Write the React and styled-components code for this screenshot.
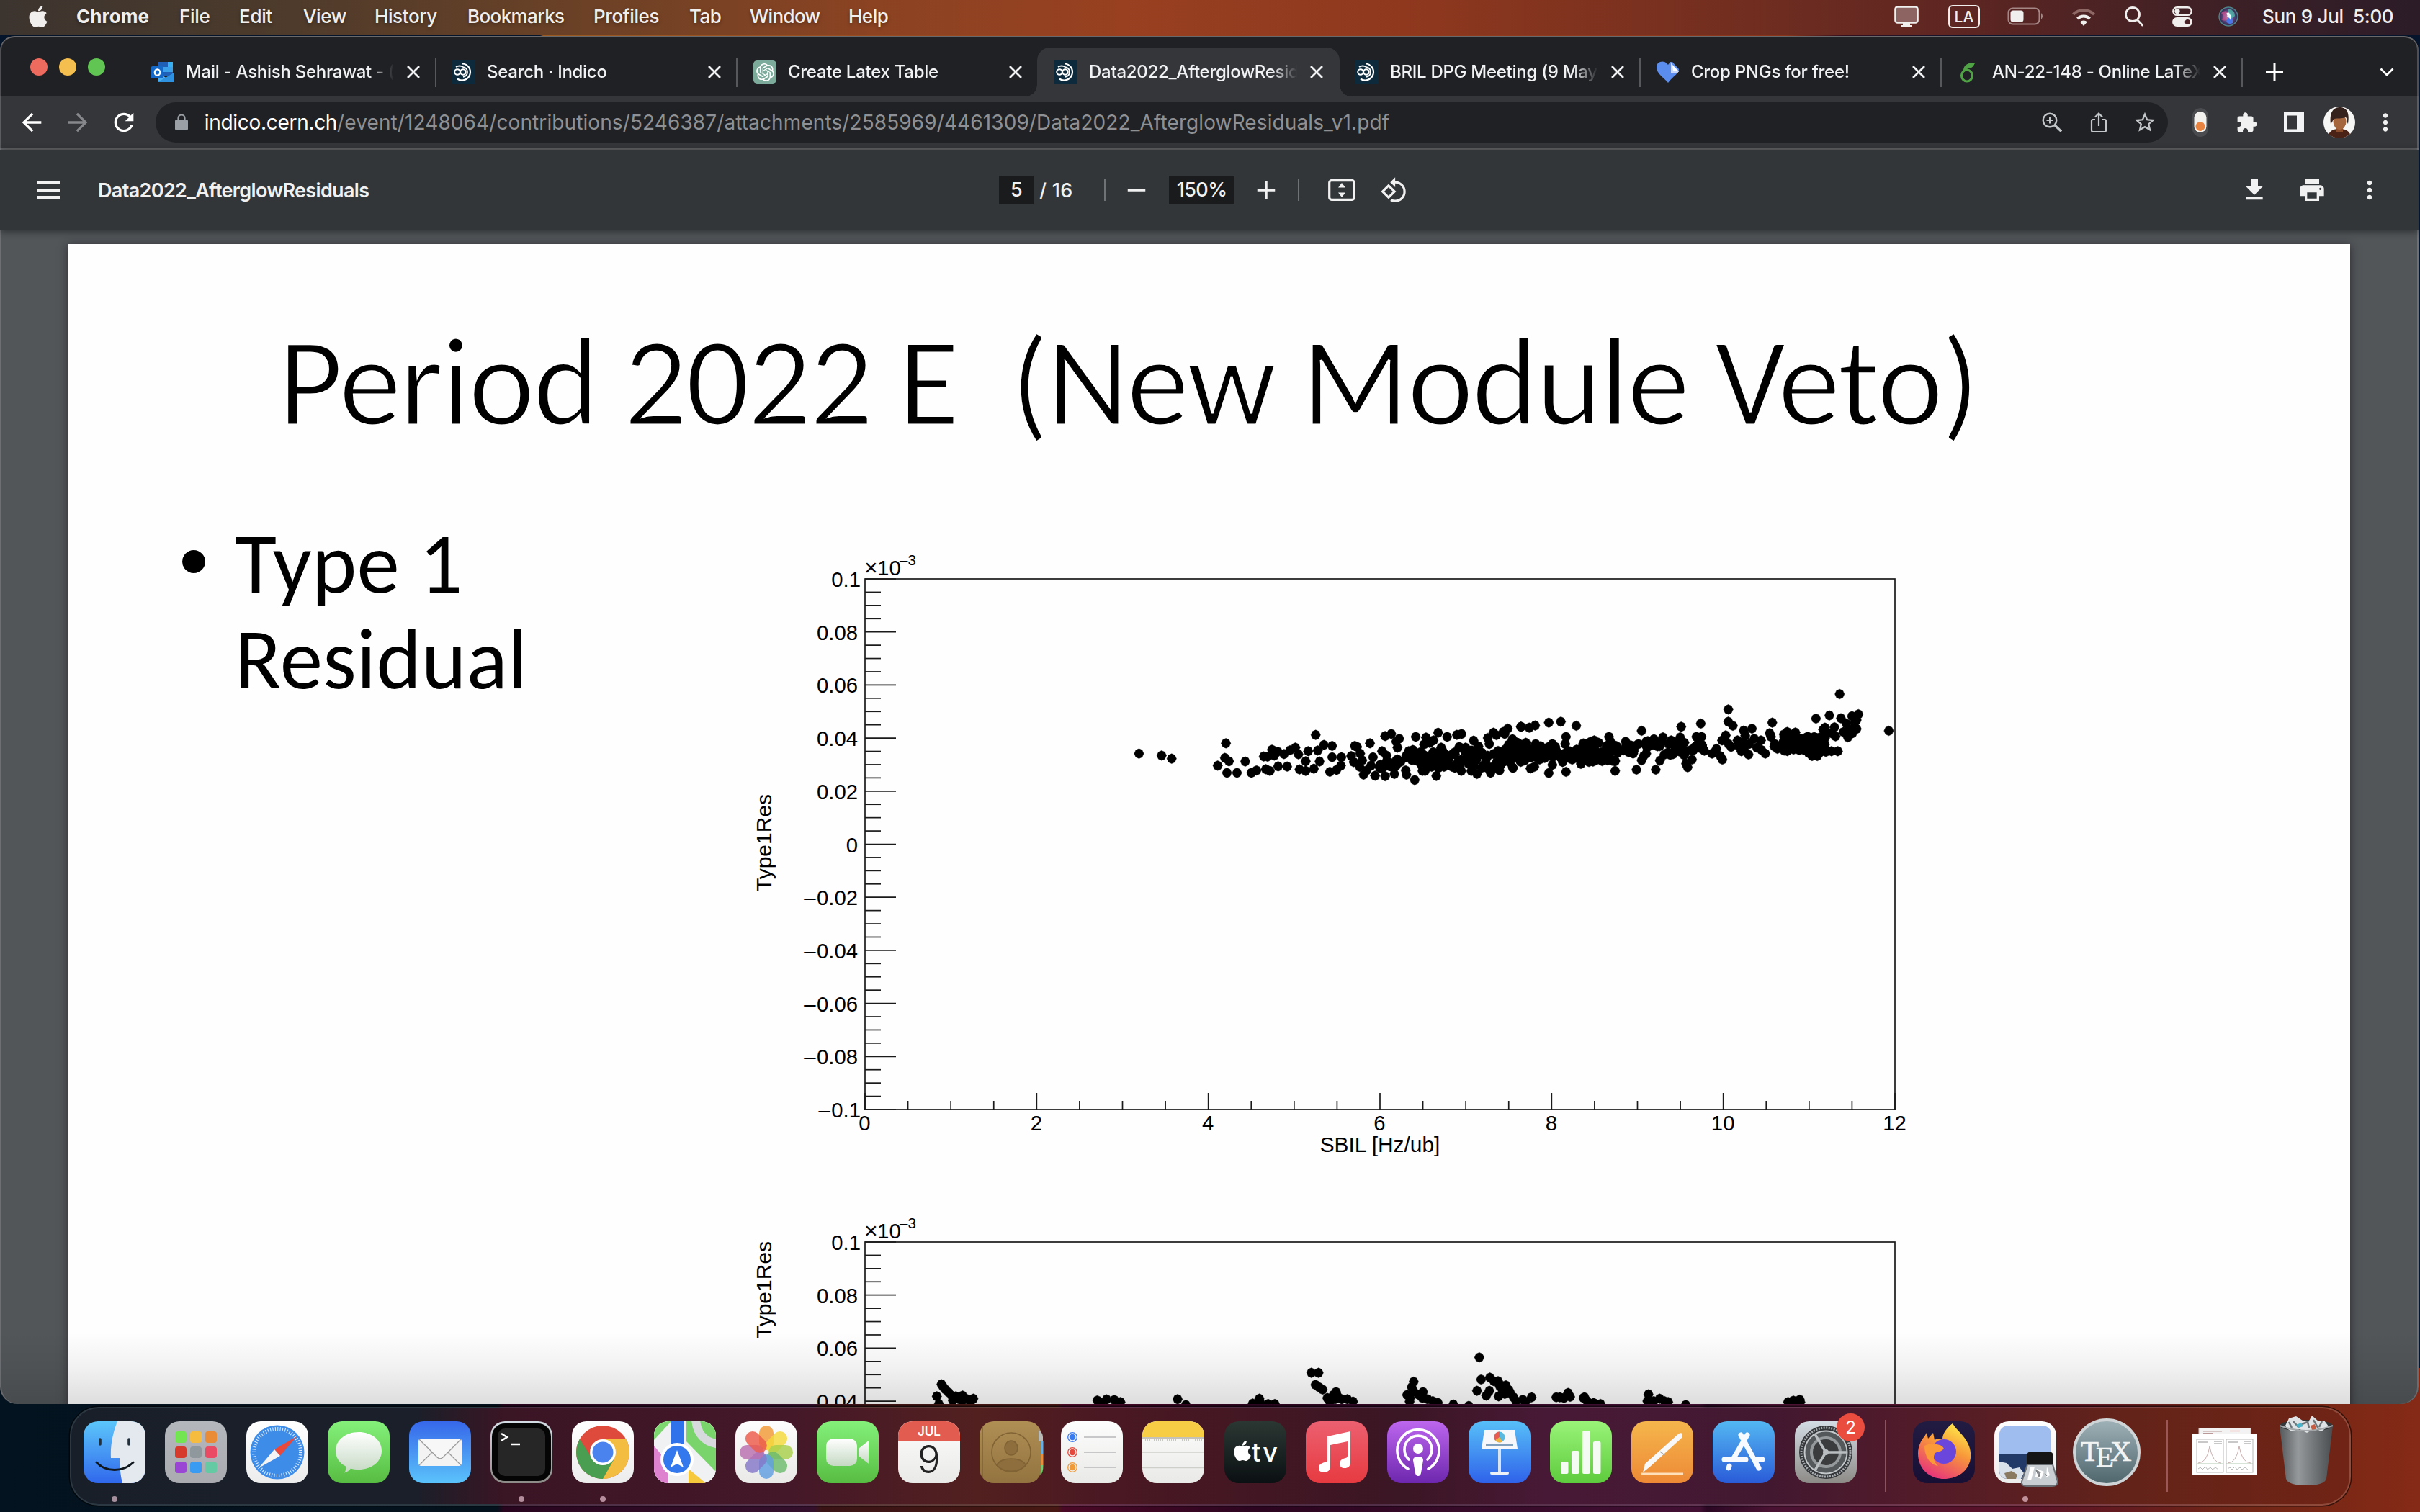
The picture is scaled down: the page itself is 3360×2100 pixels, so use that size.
import React from "react";
import styled, { createGlobalStyle } from "styled-components";
import { FaApple } from "react-icons/fa";
import { SiOpenai } from "react-icons/si";

const Global = createGlobalStyle`
  * { box-sizing: border-box; }
  html, body { margin: 0; padding: 0; overflow: hidden; }
  svg { display: block; flex: none; }
`;

const UI = `Inter, Roboto, "Liberation Sans", sans-serif`;

const Desktop = styled.div`
  width: 3360px;
  height: 2100px;
  overflow: hidden;
  display: flex;
  flex-direction: column;
  font-family: ${UI};
  background:
    linear-gradient(90deg, #03131f 0, #04121d 690px, #29051f 700px, #35102c 1130px, #3a1415 1140px, #481914 1468px, #4a0926 1476px, #2c0520 1750px, #421033 2360px, #2b0824 2370px, #4a1232 2460px, #5a1228 2800px, #702616 3110px, #852a16 3360px) 0 100% / 100% 200px no-repeat,
    linear-gradient(90deg, #04142b 0, #04142b 750px, #9a5a20 754px, #9a421e 1500px, #8a341a 2480px, #33101f 2560px, #0a1530 2760px, #06142c 3360px);
`;

/* ---------- menu bar ---------- */

const MenuBar = styled.header`
  height: 48px;
  flex: none;
  display: flex;
  align-items: center;
  justify-content: space-between;
  padding: 0 35px 3px 39px;
  color: #f0efed;
  font-size: 26px;
  background: linear-gradient(90deg, #3c342f 0, #4a3a2c 340px, #6b4126 800px, #8b4322 1210px, #984020 1560px, #8f381e 1950px, #78301f 2320px, #5c2522 2740px, #3c2026 3100px, #2b1c28 3360px);
`;

const MenuItems = styled.nav`
  display: flex;
  align-items: center;
`;

const MenuItem = styled.span`
  width: ${(p) => p.$w}px;
  font-weight: ${(p) => (p.$bold ? 700 : 500)};
  letter-spacing: ${(p) => p.$ls || 0}px;
  white-space: pre;
  text-shadow: 0 2px 5px rgba(0, 0, 0, 0.35);
`;

const StatusItems = styled.div`
  display: flex;
  align-items: center;
`;

const Status = styled.span`
  display: flex;
  width: ${(p) => p.$w}px;
  justify-content: center;
`;

const InputSource = styled.span`
  width: 44px;
  height: 32px;
  border: 2px solid #f0efed;
  border-radius: 6px;
  font-size: 21px;
  font-weight: 500;
  line-height: 29px;
  text-align: center;
`;

const Clock = styled.span`
  white-space: pre;
  font-weight: 500;
  width: 184px;
  margin-left: 16px;
  letter-spacing: -0.3px;
`;

/* ---------- browser window ---------- */

const Window = styled.main`
  position: relative;
  width: 3358px;
  height: 1900px;
  flex: none;
  margin-top: 2px;
  border-radius: 20px 20px 24px 24px;
  overflow: hidden;
  display: flex;
  flex-direction: column;
  background: #525659;
  &::after {
    content: "";
    position: absolute;
    inset: 0;
    border-radius: inherit;
    pointer-events: none;
    box-shadow: inset 0 2px 0 #69696b, inset 2px 0 0 rgba(150, 150, 155, 0.4), inset -2px 0 0 rgba(150, 150, 155, 0.4);
  }
`;

const TabStrip = styled.div`
  height: 84px;
  flex: none;
  display: flex;
  align-items: flex-end;
  background: #202124;
`;

const Lights = styled.div`
  display: flex;
  gap: 16px;
  width: 187px;
  height: 68px;
  padding: 15px 0 0 42px;
`;

const Light = styled.i`
  width: 24px;
  height: 24px;
  border-radius: 50%;
  background: ${(p) => p.$c};
`;

const Tab = styled.div`
  position: relative;
  width: 418px;
  height: 68px;
  display: flex;
  align-items: center;
  padding-left: 23px;
  color: #f1f2f4;
  &::after {
    content: "";
    position: absolute;
    right: -1px;
    top: 15px;
    width: 2px;
    height: 40px;
    background: ${(p) => (p.$divider ? "#56585b" : "transparent")};
  }
`;

const ActiveTab = styled(Tab)`
  background: #35363a;
  border-radius: 18px 18px 0 0;
  margin: 0 -1px;
  width: 420px;
  padding-left: 24px;
  &::before,
  &::after {
    content: "";
    position: absolute;
    top: auto;
    bottom: 0;
    width: 16px;
    height: 16px;
    background: radial-gradient(circle at 0 0, transparent 15.5px, #35363a 16px);
  }
  &::before { left: -16px; }
  &::after { right: -16px; background: radial-gradient(circle at 100% 0, transparent 15.5px, #35363a 16px); }
`;

const Favicon = styled.span`
  width: 32px;
  height: 32px;
  display: flex;
  align-items: center;
  justify-content: center;
  flex: none;
`;

const TabTitle = styled.span`
  width: 289px;
  margin-left: 16px;
  padding-bottom: 1px;
  font-size: 24px;
  font-weight: 500;
  letter-spacing: ${(p) => p.$ls}px;
  overflow: hidden;
  white-space: pre;
  mask-image: linear-gradient(90deg, #000 88%, transparent 100%);
`;

const Close = styled.span`
  display: flex;
  width: 24px;
  margin-left: 15px;
`;

const StripButton = styled.span`
  height: 68px;
  display: flex;
  align-items: center;
  margin-left: ${(p) => p.$ml}px;
`;

const Toolbar = styled.div`
  height: 74px;
  flex: none;
  display: flex;
  align-items: center;
  background: #35363a;
  border-bottom: 2px solid #606164;
`;

const NavButtons = styled.div`
  display: flex;
  width: 216px;
  padding-left: 24px;
  gap: 24px;
`;

const Omnibox = styled.div`
  width: 2798px;
  height: 56px;
  border-radius: 28px;
  background: #202124;
  display: flex;
  align-items: center;
  padding-left: 26px;
`;

const Url = styled.span`
  width: 2548px;
  margin-left: 22px;
  font-size: 28px;
  letter-spacing: 0.1px;
  color: #8e9093;
  white-space: nowrap;
  b { color: #ffffff; font-weight: 400; letter-spacing: -0.3px; }
`;

const IconSlot = styled.span`
  width: ${(p) => p.$w}px;
  flex: none;
  display: flex;
  justify-content: center;
`;

/* ---------- pdf viewer ---------- */

const PdfBar = styled.div`
  position: relative;
  z-index: 1;
  height: 112px;
  flex: none;
  display: flex;
  align-items: center;
  background: #323639;
  color: #f1f1f1;
  font-size: 27px;
  font-weight: 500;
  box-shadow: 0 2px 10px rgba(0, 0, 0, 0.45);
`;

const DocTitle = styled.span`
  width: 1251px;
  font-weight: 600;
  letter-spacing: -0.65px;
`;

const Field = styled.span`
  width: ${(p) => p.$w}px;
  height: 40px;
  line-height: 40px;
  text-align: center;
  background: #191b1c;
  letter-spacing: -0.6px;
`;

const PageCount = styled.span`
  width: 98px;
  padding-left: 8px;
  white-space: nowrap;
  letter-spacing: 0.3px;
`;

const Rule = styled.i`
  width: 2px;
  height: 30px;
  background: #707375;
  margin-right: ${(p) => p.$mr}px;
`;

const Viewer = styled.div`
  position: relative;
  flex: 1;
  display: flex;
  padding: 19px 0 0 95px;
  overflow: hidden;
  &::after {
    content: "";
    position: absolute;
    left: 0;
    right: 0;
    bottom: 0;
    height: 100px;
    background: linear-gradient(rgba(0, 0, 0, 0), rgba(0, 0, 0, 0.05) 50%, rgba(0, 0, 0, 0.13));
  }
`;

const Slide = styled.article`
  width: 3168px;
  height: 1900px;
  flex: none;
  background: #fefefe;
  box-shadow: 0 2px 12px rgba(20, 15, 25, 0.65);
  display: flex;
  flex-direction: column;
  font-family: Carlito, Calibri, Lato, sans-serif;
  color: #000;
`;

const SlideTitle = styled.h1`
  margin: 0;
  height: 421px;
  padding: 101px 0 0 291px;
  font-size: 175px;
  line-height: 180px;
  font-weight: 400;
  white-space: pre;
  letter-spacing: -2.7px;
  -webkit-text-stroke: 3.2px #fefefe;
`;

const SlideBody = styled.div`
  display: flex;
`;

const Bullets = styled.ul`
  list-style: none;
  margin: 0;
  width: 935px;
  padding: 0 0 0 158px;
`;

const Bullet = styled.li`
  display: flex;
  font-size: 119px;
  line-height: 133px;
  font-weight: 400;
  letter-spacing: 0.2px;
  margin-top: -44px;
`;

const Dot = styled.i`
  width: 32px;
  height: 32px;
  border-radius: 50%;
  background: #000;
  margin: 48px 41px 0 0;
`;

const Charts = styled.div`
  display: flex;
  flex-direction: column;
`;

/* ---------- chart ---------- */

const LEFT = 171;
const TOP = 44;
const W = 1430;
const H = 737;

// Deterministic jitter for the dense part of the cloud.
function makeRandom(seed) {
  let s = seed;
  return () => {
    s = (s * 1664525 + 1013904223) % 4294967296;
    return s / 4294967296;
  };
}

const at = (ox, oy, k, list) => list.map(([x, y]) => [ox + x * k, oy + y / 3]);

const sbilLow = [[60,440],[148,448],[187,461],[398,397],[366,490],[394,458],[410,472],[402,520],[441,520],[473,473],[497,520],[517,510],[553,505],[569,512],[601,493],[636,494],[545,452],[560,453],[577,424],[600,432],[586,448],[624,442],[647,426],[668,415],[680,443],[718,430],[755,427],[747,362],[779,404],[811,408],[708,472],[708,512],[684,506],[740,503],[762,473],[811,455],[847,455],[802,516],[828,508],[845,490],[885,450],[899,408],[908,412],[895,475],[920,440],[928,468],[918,495],[933,528],[945,510],[958,397],[978,532],[962,490],[970,455],[1005,430],[1017,367],[1041,358],[1017,534],[1053,525],[1060,490],[1035,490],[998,498],[1072,378],[1060,390],[1065,415],[1097,510],[1100,528],[1132,550],[1136,370],[1176,373],[1168,402],[1205,385],[1190,395],[1223,353],[1258,370],[1296,362],[1314,358],[1216,533],[1162,512],[1172,512],[1361,386],[1380,410],[1305,412],[1330,415],[1416,375],[1422,400],[1438,353],[1450,363],[1476,350],[1494,336],[1482,358],[1545,328],[1313,512],[1352,512],[1374,525],[1427,520],[1462,510],[1513,498],[1513,383],[1497,403],[1530,395],[1125,425],[1235,415]];
const sbilHigh = [[33,328],[65,332],[88,323],[141,311],[188,307],[248,324],[502,345],[656,328],[732,315],[839,256],[839,307],[857,324],[931,336],[899,344],[1010,311],[1180,294],[1232,281],[1272,192],[1277,293],[1320,284],[1345,276],[1338,300],[1338,337],[1298,315],[1287,350],[1304,372],[1322,355],[1312,340],[1252,330],[1215,332],[1208,340],[1220,355],[1256,368],[1240,355],[1463,345],[1240,430],[1265,430],[141,521],[155,487],[70,502],[85,495],[208,516],[208,370],[205,400],[266,483],[375,370],[381,390],[399,512],[399,470],[482,507],[502,468],[520,440],[510,450],[557,507],[573,469],[675,482],[681,497],[698,465],[816,465],[808,450],[776,440],[829,364],[815,385],[825,380],[850,412],[793,420],[840,400],[875,385],[918,444],[890,430],[905,400],[905,365],[880,410],[940,378],[966,385],[983,440],[950,415],[968,425],[1000,355],[1005,370],[1030,420],[1020,400],[1018,410],[1068,350],[1100,352],[1148,370],[1055,360],[1080,360],[1185,450],[0,380],[2,500],[20,395],[52,395],[90,400],[105,465],[155,400],[145,410],[318,385],[305,390],[335,395],[440,390],[195,475],[232,465],[550,380],[585,372],[520,390],[490,400],[652,372],[715,370],[735,370],[725,390],[617,385],[670,440],[1195,375],[1205,385],[1215,375],[1330,312],[920,400],[888,395],[902,428]];

// [x from, x to, upper edge, lower edge, count], same local units as the lists above.
const cloudLow = [[990, 1080, 445, 500, 14], [1080, 1240, 430, 470, 36], [1150, 1320, 465, 500, 20], [1210, 1480, 425, 470, 40], [1340, 1480, 465, 505, 16], [1480, 1568, 395, 480, 38]];
const cloudHigh = [[0, 110, 405, 460, 34], [115, 250, 410, 460, 32], [250, 400, 430, 475, 34], [270, 350, 395, 430, 10], [350, 480, 405, 440, 26], [520, 600, 385, 415, 13], [590, 680, 390, 450, 22], [690, 765, 395, 430, 15], [1050, 1210, 370, 430, 65], [1150, 1220, 400, 450, 22]];

function fill(bands, seed) {
  const r = makeRandom(seed);
  return bands.flatMap(([a, b, t, u, n]) => Array.from({ length: n }, () => [a + (b - a) * r(), t + (u - t) * r()]));
}

const scatterTop = [
  ...at(1560 - 1030, 900 - 760, 0.3571, [...sbilLow, ...fill(cloudLow, 7)]),
  ...at(2100 - 1030, 900 - 760, 0.3571, [...sbilHigh, ...fill(cloudHigh, 23)]),
];

const timeLeft = [[290,68],[293,78],[298,90],[304,102],[310,115],[281,118],[285,150],[322,128],[331,115],[340,130],[352,128],[312,135],[330,138],[318,118],[347,140],[593,135],[611,131],[626,133],[638,142],[600,145],[749,130],[765,154],[908,128],[895,148],[910,145],[925,150],[938,150],[1009,20],[1023,20],[1017,70],[1024,80],[1031,90],[1057,100],[1052,112],[1040,125],[1055,130],[1068,130],[1079,130],[1090,140],[1045,142],[1060,118],[1208,57],[1204,80],[1195,112],[1208,98],[1226,100],[1218,112],[1225,125],[1235,130],[1245,138],[1200,140],[1201,125],[1255,145],[1285,152],[1315,158],[1331,95],[1339,48],[1356,40],[1364,55],[1372,55],[1387,72],[1349,115],[1355,95],[1375,75],[1380,90],[1373,118],[1385,80],[1393,92],[1396,105],[1385,108],[1402,122],[1407,138],[1420,132],[1425,142],[1437,122],[1485,122],[1492,122],[1508,104],[1500,125],[1512,120],[1538,125],[1545,138],[1558,146]];
const timeRight = [[0,122],[15,148],[30,150],[120,110],[118,138],[130,138],[141,128],[150,138],[157,142],[190,154],[382,142],[392,136],[404,132],[405,142]];
const scatterBottom = [
  ...at(1100 - 1030, 1900 - 1681, 0.7143, timeLeft),
  ...at(2200 - 1030, 1900 - 1681, 0.7398, timeRight),
  [1023.9, 204.3],
];

function Chart({ points, height, yTitleEnd, xAxis }) {
  const yTicks = Array.from({ length: xAxis ? 41 : 14 }, (_, i) => i);
  const xTicks = Array.from({ length: 25 }, (_, i) => i);
  return (
    <svg width="1700" height={height} viewBox={`0 0 1700 ${height}`} fontFamily='"Liberation Sans", Arial, sans-serif' fontSize="29.3" fill="#000">
      <rect x={LEFT} y={TOP} width={W} height={H} fill="none" stroke="#1a1a1a" strokeWidth="1.7" />
      {yTicks.map((i) => (
        <line key={i} x1={LEFT} x2={LEFT + (i % 4 ? 22 : 43)} y1={TOP + (i * H) / 40} y2={TOP + (i * H) / 40} stroke="#1a1a1a" strokeWidth="1.7" />
      ))}
      {yTicks.filter((i) => i % 4 === 0).map((i) => {
        const v = (20 - i) / 200;
        const edge = i === 0 || i === 40;
        const label = v === 0 ? "0" : Math.abs(v).toFixed(edge ? 1 : 2);
        return (
          <text key={i} x={edge ? 165 : 161} y={TOP + (i * H) / 40 + 11} textAnchor="end">
            {v < 0 && <tspan letterSpacing="1.5">–</tspan>}{label}
          </text>
        );
      })}
      <text x="170" y="39" fontSize="32">×<tspan x="188" fontSize="29.500">10</tspan></text>
      <text x="219" y="25" fontSize="20.500">–3</text>
      <text transform={`translate(41 ${yTitleEnd}) rotate(-90)`} fontSize="30">Type1Res</text>
      {xAxis && xTicks.map((i) => (
        <line key={i} x1={LEFT + (i * W) / 24} x2={LEFT + (i * W) / 24} y1={TOP + H} y2={TOP + H - (i % 4 ? 12 : 23)} stroke="#1a1a1a" strokeWidth="1.7" />
      ))}
      {xAxis && xTicks.filter((i) => i % 4 === 0).map((i) => (
        <text key={i} x={LEFT + (i * W) / 24 - 0.5} y={TOP + H + 29} textAnchor="middle">{i / 2}</text>
      ))}
      {xAxis && <text x="886" y="840" textAnchor="middle" fontSize="29.900">SBIL [Hz/ub]</text>}
      {points.map(([x, y], i) => (
        <path key={i} d={`M${x - 6.6} ${y}l2.200-4.800 4.400-2 4.400 2 2.200 4.800-2.200 4.800-4.400 2-4.400-2z`} stroke="#000" strokeWidth="0.500" />
      ))}
    </svg>
  );
}

/* ---------- small glyphs ---------- */

const Glyph = ({ d, size = 40, color = "#f1f1f1", children }) => (
  <svg width={size} height={size} viewBox="0 0 24 24" fill={color}>
    {d && <path d={d} />}
    {children}
  </svg>
);

const PATH = {
  back: "M20 11H7.83l5.59-5.59L12 4l-8 8 8 8 1.41-1.41L7.83 13H20v-2z",
  forward: "M12 4l-1.41 1.41L16.17 11H4v2h12.17l-5.58 5.59L12 20l8-8z",
  reload: "M17.65 6.35C16.2 4.9 14.21 4 12 4c-4.42 0-7.99 3.58-7.99 8s3.57 8 7.99 8c3.73 0 6.84-2.55 7.73-6h-2.08c-.82 2.33-3.04 4-5.65 4-3.31 0-6-2.69-6-6s2.69-6 6-6c1.66 0 3.14.69 4.22 1.78L13 11h7V4l-2.35 2.35z",
  star: "M22 9.24l-7.19-.62L12 2 9.19 8.63 2 9.24l5.46 4.73L5.82 21 12 17.27 18.18 21l-1.63-7.03L22 9.24zM12 15.4l-3.76 2.27 1-4.28-3.32-2.88 4.38-.38L12 6.1l1.71 4.04 4.38.38-3.32 2.88 1 4.28L12 15.4z",
  puzzle: "M20.5 11H19V7c0-1.1-.9-2-2-2h-4V3.5C13 2.12 11.88 1 10.5 1S8 2.12 8 3.5V5H4c-1.1 0-1.99.9-1.99 2v3.8H3.5c1.49 0 2.7 1.21 2.7 2.7s-1.21 2.7-2.7 2.7H2V20c0 1.1.9 2 2 2h3.8v-1.5c0-1.49 1.21-2.7 2.7-2.7 1.49 0 2.7 1.21 2.7 2.7V22H17c1.1 0 2-.9 2-2v-4h1.5c1.38 0 2.5-1.12 2.5-2.5S21.88 11 20.5 11z",
  download: "M19 9h-4V3H9v6H5l7 7 7-7zM5 18v2h14v-2H5z",
  print: "M19 8H5c-1.66 0-3 1.34-3 3v6h4v4h12v-4h4v-6c0-1.66-1.34-3-3-3zm-3 11H8v-5h8v5zm3-7c-.55 0-1-.45-1-1s.45-1 1-1 1 .45 1 1-.45 1-1 1zm-1-9H6v4h12V3z",
  more: "M12 8c1.1 0 2-.9 2-2s-.9-2-2-2-2 .9-2 2 .9 2 2 2zm0 2c-1.1 0-2 .9-2 2s.9 2 2 2 2-.9 2-2-.9-2-2-2zm0 6c-1.1 0-2 .9-2 2s.9 2 2 2 2-.9 2-2-.9-2-2-2z",
  plus: "M19 13h-6v6h-2v-6H5v-2h6V5h2v6h6v2z",
  minus: "M19 13H5v-2h14v2z",
  rotate: "M7.34 6.41L.86 12.9l6.49 6.48 6.49-6.48-6.5-6.49zM3.69 12.9l3.66-3.66L11 12.9l-3.66 3.66-3.65-3.66zm15.67-6.26C17.61 4.88 15.3 4 13 4V.76L8.76 5 13 9.24V6c1.79 0 3.58.68 4.95 2.05 2.73 2.73 2.73 7.17 0 9.9C16.58 19.32 14.79 20 13 20c-.97 0-1.94-.21-2.84-.61l-1.49 1.49C10.02 21.62 11.51 22 13 22c2.3 0 4.61-.88 6.36-2.64 3.52-3.51 3.52-9.21 0-12.72z",
};

const Cross = () => (
  <svg width="24" height="24" viewBox="0 0 24 24" stroke="#f1f2f4" strokeWidth="2.600">
    <path d="M4 4l16 16M20 4L4 20" />
  </svg>
);

const MenuGlyph = () => (
  <svg width="32" height="24" viewBox="0 0 32 24" fill="#f1f1f1">
    <path d="M0 0h32v4H0zM0 10h32v4H0zM0 20h32v4H0z" />
  </svg>
);

const PageActions = () => (
  <>
    <IconSlot $w={34}>
      <svg width="28" height="28" viewBox="0 0 28 28" fill="none" stroke="#c4c7ca" strokeWidth="2.400"><circle cx="11" cy="11" r="9.300" /><path d="M17.500 17.500L27 26.500" strokeWidth="3.200" /><path d="M11 6.500v9M6.500 11h9" strokeWidth="2" /></svg>
    </IconSlot>
    <IconSlot $w={96}>
      <svg width="24" height="30" viewBox="0 0 24 30" fill="none" stroke="#c4c7ca" strokeWidth="2.200"><path d="M7 11H4q-2 0-2 2v13q0 2 2 2h16q2 0 2-2V13q0-2-2-2h-3M12 20V3M7 7.500l5-5 5 5" /></svg>
    </IconSlot>
    <IconSlot $w={32}><Glyph d={PATH.star} size={34} color="#c4c7ca" /></IconSlot>
  </>
);

const Outlook = () => (
  <svg width="32" height="32" viewBox="0 0 32 32">
    <rect x="10" y="2" width="20" height="20" fill="#1f5fb8" />
    <path d="M17 9h13v7H17z" fill="#3aa0ea" />
    <path d="M23 2h7v7h-7z" fill="#35b0f5" />
    <path d="M9 17l11.500 7L32 17v13H9z" fill="#4bb0f0" />
    <path d="M32 17L9 30h23z" fill="#2f92e0" />
    <rect x="0" y="8" width="17" height="17" rx="1.500" fill="#1668c6" />
    <ellipse cx="8.500" cy="16.500" rx="3.700" ry="4.200" fill="none" stroke="#fff" strokeWidth="2.200" />
  </svg>
);

const Indico = () => (
  <svg width="32" height="32" viewBox="0 0 32 32" fill="none" stroke="#fff">
    <rect width="32" height="32" fill="#0c2a3c" stroke="none" />
    <circle cx="7" cy="16" r="3.800" strokeWidth="2" />
    <circle cx="15" cy="16" r="3.800" strokeWidth="2" />
    <path d="M14 4.500a11.500 11.500 0 1 1-7 21" strokeWidth="2.200" />
    <path d="M5 9q5-3 10 0 6 1.500 6 7t-6 7" strokeWidth="1.800" />
  </svg>
);

const ChatIcon = styled.span`
  width: 32px;
  height: 32px;
  border-radius: 5px;
  background: #7cab9b;
  color: #fff;
  display: flex;
  align-items: center;
  justify-content: center;
`;

const Heart = () => (
  <svg width="32" height="32" viewBox="0 0 32 32">
    <path d="M16 31C8 22 0 18 0 9 0 2 9-1 14 4l2 2 3-4h3l9 10c0 6-8 10-15 19z" fill="#5b8def" />
    <path d="M20 4l11 11-3 3-8-1z" fill="#fff" />
    <path d="M20 17l8 1 3-3-8-1-1-8-2-2z" fill="#c5d7ff" />
  </svg>
);

const Leaf = () => (
  <svg width="32" height="32" viewBox="0 0 32 32">
    <ellipse cx="13" cy="21" rx="7.500" ry="8" fill="none" stroke="#4fa345" strokeWidth="3.200" />
    <path d="M8 13C9 6 14 3 25 3c-3 2-2 7-9 8-3 .5-5 2-8 4z" fill="#4fa345" />
  </svg>
);

const ToggleExtension = () => (
  <svg width="24" height="42" viewBox="0 0 24 42">
    <rect x="1" y="1" width="22" height="40" rx="11" fill="#4b4c50" />
    <rect x="3.500" y="6" width="17" height="29" rx="8.500" fill="#f3f1ee" />
    <circle cx="12" cy="26.500" r="6.500" fill="#e88440" />
  </svg>
);

const Avatar = () => (
  <svg width="44" height="44" viewBox="0 0 44 44">
    <clipPath id="face"><circle cx="22" cy="22" r="22" /></clipPath>
    <g clipPath="url(#face)">
      <rect width="44" height="44" fill="#f6f6f4" />
      <path d="M6 44c1-9 5-13 16-13s15 4 17 13z" fill="#4b2216" />
      <rect x="17" y="25" width="10" height="11" fill="#8a4d2c" />
      <ellipse cx="22.500" cy="21" rx="9" ry="11" fill="#a5653d" />
      <path d="M10 24C8 6 15 1 23 1s14 6 11 23c-2-3-1-7-3-9-6 2-12 1-16 2-2 1-2 4-5 7z" fill="#35221c" />
    </g>
  </svg>
);

/* ---------- dock ---------- */

const DockPanel = styled.footer`
  width: 3167px;
  height: 137px;
  flex: none;
  margin: 4px 0 0 97px;
  border-radius: 40px;
  border: 2px solid rgba(255, 255, 255, 0.16);
  display: flex;
  padding: 18px 0 0 3px;
  background: linear-gradient(90deg, #191f29 0, #1b1f29 480px, #3a1524 600px, #451829 1000px, #52201f 1260px, #4a1822 1430px, #3b1624 1850px, #481936 2050px, #421830 2360px, #521b2a 2560px, #632319 2850px, #702415 3167px);
  background-clip: padding-box;
  box-shadow: 0 0 0 1.5px rgba(0, 0, 0, 0.6);
`;

const DockItem = styled.div`
  position: relative;
  width: ${(p) => p.$w || 113.15}px;
  display: flex;
  flex-direction: column;
  align-items: center;
`;

const Running = styled.i`
  width: 8px;
  height: 8px;
  border-radius: 50%;
  margin-top: 18px;
  background: rgba(255, 215, 230, 0.62);
`;

const DockRule = styled.i`
  width: 2px;
  height: 100px;
  margin: -2px ${(p) => p.$mr}px 0 ${(p) => p.$ml}px;
  background: rgba(220, 150, 160, 0.45);
`;

const Badge = styled.span`
  position: absolute;
  right: 2px;
  top: -11px;
  width: 39px;
  height: 39px;
  border-radius: 50%;
  background: #ea4d3e;
  color: #fff;
  font-size: 24px;
  line-height: 39px;
  text-align: center;
`;

const TILES = {
  finder: ["#5cc6fa", "#3068ec"],
  launchpad: ["#b4b7bb", "#a9abb1"],
  white: ["#ffffff", "#ececec"],
  green: ["#84f07a", "#57bd42"],
  mail: ["#3667ea", "#5bc3fb"],
  contacts: ["#b08f55", "#93733f"],
  tv: ["#2b3733", "#0b1012"],
  music: ["#ec6070", "#e73a40"],
  podcasts: ["#bd66ee", "#6d27ae"],
  keynote: ["#57bff8", "#2f62ea"],
  numbers: ["#99f378", "#5ecb3d"],
  pages: ["#f5b64c", "#ed8936"],
  store: ["#53b7f2", "#2a5bd8"],
  settings: ["#d3dce4", "#8d8b87"],
  firefox: ["#221b42", "#170f34"],
  paper: ["#fdfdfd", "#e9e9e7"],
};

function Tile({ tone, children }) {
  const [a, b] = TILES[tone];
  const id = "t-" + tone;
  return (
    <svg width="86" height="86" viewBox="0 0 86 86" overflow="visible">
      <defs>
        <linearGradient id={id} x2="0" y2="1"><stop stopColor={a} /><stop offset="1" stopColor={b} /></linearGradient>
        <linearGradient id="soft" x2="0" y2="1"><stop stopColor="#fff" /><stop offset="1" stopColor="#c5d9c3" /></linearGradient>
        <clipPath id="tile"><rect width="86" height="86" rx="20" /></clipPath>
      </defs>
      <rect width="86" height="86" rx="20" fill={`url(#${id})`} />
      {children}
    </svg>
  );
}

const Finder = () => (
  <Tile tone="finder">
    <path clipPath="url(#tile)" d="M47 0H86V86H54C51 74 50 62 50 51H38C37 33 41 15 47 0z" fill="#e4e9f0" />
    <path d="M23 25v7M63 25v7" stroke="#22303e" strokeWidth="3.600" strokeLinecap="round" />
    <path d="M18 57c13 14 37 14 51 0" stroke="#10161d" strokeWidth="3" fill="none" strokeLinecap="round" />
  </Tile>
);

const padColors = ["#74e552", "#f5bc40", "#ea8b35", "#d63a2c", "#8f989c", "#ea4a63", "#9a45d3", "#3a9bf3", "#63caa4"];
const Launchpad = () => (
  <Tile tone="launchpad">
    {padColors.map((c, i) => (
      <rect key={i} x={14 + (i % 3) * 21} y={14 + Math.floor(i / 3) * 21} width="16" height="16" rx="4" fill={c} />
    ))}
  </Tile>
);

const Safari = () => (
  <Tile tone="white">
    <circle cx="43" cy="43" r="37.500" fill="#3d8ce8" />
    <circle cx="43" cy="43" r="32.500" fill="none" stroke="#dceaff" strokeWidth="5" strokeDasharray="1.100 2.303" />
    <path d="M70 21L47 48 39 39z" fill="#e9493c" />
    <path d="M17 65L39 39 47 48z" fill="#f4f4f4" />
  </Tile>
);

const Messages = () => (
  <Tile tone="green">
    <path d="M43 15c18 0 32 11 32 26S61 67 43 67c-4 0-8-.5-11-1.500-2 3-5 5-9 6 2-3 3-6 2-9C16 58 11 50 11 41c0-15 14-26 32-26z" fill="url(#soft)" />
  </Tile>
);

const Mail = () => (
  <Tile tone="mail">
    <rect x="13" y="24" width="60" height="38" rx="4" fill="#f3f3f3" />
    <path d="M14 61l20-20M72 61L52 41" stroke="#9a9a9a" strokeWidth="1.300" />
    <path d="M14 25l25 25c2.500 2.300 5.500 2.300 8 0l25-25" fill="#f7f7f7" stroke="#9a9a9a" strokeWidth="1.300" />
  </Tile>
);

const Terminal = () => (
  <Tile tone="settings">
    <rect x="2" y="3" width="82" height="80" rx="18" fill="#050505" />
    <rect x="10" y="10" width="66" height="66" rx="10" fill="#262626" />
    <path d="M15 17l8 5-8 5M29 32h12" stroke="#fff" strokeWidth="2.600" fill="none" />
  </Tile>
);

const Chrome = () => (
  <Tile tone="white">
    <circle cx="43" cy="43" r="37" fill="#de4b3c" />
    <path d="M11 24.500A37 37 0 0 0 43 80L59 52 28 52z" fill="#4a9e52" />
    <path d="M75 24.500H43L59 52 43 80A37 37 0 0 0 75 24.500z" fill="#f3bd42" />
    <circle cx="43" cy="43" r="18" fill="#fff" />
    <circle cx="43" cy="43" r="14.500" fill="#4a83ee" />
  </Tile>
);

const Maps = () => (
  <Tile tone="white">
    <g clipPath="url(#tile)">
      <rect width="86" height="86" fill="#f0f1f3" />
      <path d="M0 0h24L0 26z" fill="#7ed870" />
      <path d="M45 0h41v70L45 28z" fill="#79d46c" />
      <path d="M0 34l20 24v28H0z" fill="#de82cf" />
      <path d="M48 86V66l24 20z" fill="#f6c83c" />
      <path d="M58-6c0 22 12 36 34 38" fill="none" stroke="#d6dadd" strokeWidth="12" />
      <rect x="23" y="0" width="18" height="44" fill="#2f72ea" />
      <circle cx="32" cy="53" r="23" fill="#fff" />
      <circle cx="32" cy="53" r="19" fill="#3478ee" />
      <path d="M32 40l9 24-9-5-9 5z" fill="#fff" />
    </g>
  </Tile>
);

const petals = ["#f29a37", "#f4d93a", "#a9cf4a", "#6dbb6c", "#5f9fe0", "#8477c8", "#b96fb0", "#ec5a4a"];
const Photos = () => (
  <Tile tone="paper">
    {petals.map((c, i) => (
      <rect key={i} x="33" y="6" width="20" height="34" rx="10" fill={c} opacity="0.82" transform={`rotate(${i * 45} 43 43)`} />
    ))}
  </Tile>
);

const FaceTime = () => (
  <Tile tone="green">
    <rect x="13" y="24" width="43" height="38" rx="10" fill="url(#soft)" />
    <path d="M58 38l14-11v32L58 48z" fill="url(#soft)" />
  </Tile>
);

const Calendar = () => (
  <Tile tone="paper">
    <path clipPath="url(#tile)" d="M0 0h86v27H0z" fill="#e25d4f" />
    <text x="43" y="20" fontSize="17" fontWeight="600" textAnchor="middle" fill="#fff" fontFamily="Inter, sans-serif">JUL</text>
    <text x="43" y="72" fontSize="53" fontWeight="300" textAnchor="middle" fill="#222" fontFamily="Inter, sans-serif">9</text>
  </Tile>
);

const Contacts = () => (
  <Tile tone="contacts">
    <path d="M82 12q6 4 6 10v6h-6z" fill="#b9b9b6" />
    <path d="M85.500 28h3v17h-3z" fill="#5eb3ee" />
    <path d="M85.500 45h3v16h-3z" fill="#ee8c35" />
    <path d="M85.500 61h3q0 10-4 14z" fill="#6ed06a" />
    <g fill="none" stroke="#806334" strokeWidth="1.600">
      <circle cx="44" cy="43" r="27" />
      <ellipse cx="44" cy="37" rx="9" ry="10" fill="#8d6e3c" />
      <path d="M24 61c4-12 36-12 40 0-10 11-30 11-40 0z" fill="#8d6e3c" />
    </g>
    <path d="M4 8v70" stroke="#806334" strokeWidth="1.500" />
  </Tile>
);

const Reminders = () => (
  <Tile tone="paper">
    {["#3a7cf0", "#e5493d", "#f09a37"].map((c, i) => (
      <g key={c} transform={`translate(0 ${22 + i * 21})`}>
        <circle cx="16" cy="0" r="6.300" fill="none" stroke={c} strokeWidth="1.300" />
        <circle cx="16" cy="0" r="4.300" fill={c} />
        <path d="M32 0h44" stroke="#b9b9bb" strokeWidth="1.600" />
      </g>
    ))}
  </Tile>
);

const Notes = () => (
  <Tile tone="paper">
    <path clipPath="url(#tile)" d="M0 0h86v22H0z" fill="#f7cd46" />
    <path d="M0 23h86" stroke="#b5b1a6" strokeWidth="1.500" />
    <path d="M4 26h80" stroke="#c9c6bd" strokeWidth="2" strokeDasharray="1 2" />
    <path d="M0 43h86M0 64.500h86" stroke="#cfcfca" strokeWidth="1.500" />
  </Tile>
);

const Tv = () => (
  <Tile tone="tv">
    <FaApple size={32} x="9" y="25" color="#fff" />
    <text x="38" y="56" fontSize="36" fontWeight="500" fill="#fff" fontFamily="Inter, sans-serif" textLength="36">tv</text>
  </Tile>
);

const Music = () => (
  <Tile tone="music">
    <path d="M30 21l32-7v43c0 5-3 8-8 8-4 0-7-2-7-6 0-5 4-7 8-8 2-.4 3-1 3-3V28l-24 5v30c0 5-4 8-9 8-4 0-7-2-7-6 0-5 4-7 8-8 3-.5 4-1 4-3z" fill="#fff" />
  </Tile>
);

const Podcasts = () => (
  <Tile tone="podcasts">
    <g fill="none" stroke="#fff" strokeWidth="3.600" strokeLinecap="round">
      <path d="M29 66a29 29 0 1 1 28 0" />
      <path d="M30 53a19 19 0 1 1 26 0" />
    </g>
    <circle cx="43" cy="38" r="7" fill="#fff" />
    <path d="M36 54q0-5 7-5t7 5l-3 18q-1 4-4 4t-4-4z" fill="#fff" />
  </Tile>
);

const Keynote = () => (
  <Tile tone="keynote">
    <path d="M22 12h42l4 26H18z" fill="#f5f7fa" />
    <path d="M24 33h38" stroke="#7ea0be" strokeWidth="2.500" />
    <circle cx="43" cy="22" r="7.500" fill="#5bb8e0" />
    <path d="M43 22v-7.500a7.500 7.500 0 0 0-6 12z" fill="#e95b50" />
    <path d="M43 22l-6 4.500a7.500 7.500 0 0 0 10 1.800z" fill="#f0b240" />
    <rect x="41" y="38" width="4" height="34" fill="#dbe3ec" />
    <rect x="30" y="70" width="26" height="4" rx="2" fill="#eef2f6" />
  </Tile>
);

const Numbers = () => (
  <Tile tone="numbers">
    {[[15, 17], [30, 32], [45, 60], [60, 45]].map(([x, h]) => (
      <rect key={x} x={x} y={73 - h} width="10.500" height={h} rx="2" fill="#f4fbf2" />
    ))}
  </Tile>
);

const Pages = () => (
  <Tile tone="pages">
    <path d="M14 73h58" stroke="#ffe0bb" strokeWidth="3" />
    <path d="M66 17c5-2 6 1 4 6L26 63l-10 8 3-12z" fill="#f8f8f8" />
    <path d="M40 42l6 5" stroke="#a9a9a9" strokeWidth="1.500" />
  </Tile>
);

const Store = () => (
  <Tile tone="store">
    <g stroke="#f7fbff" strokeWidth="7" strokeLinecap="round">
      <path d="M39 19L64 65M48 19L28 53" />
      <path d="M16 53h30M59 53h10M23 62l-1 3" />
    </g>
  </Tile>
);

const Settings = () => (
  <Tile tone="settings">
    <circle cx="43" cy="43" r="37" fill="#35373a" />
    <circle cx="43" cy="43" r="34" fill="none" stroke="#a8adb1" strokeWidth="3" strokeDasharray="2 1.560" />
    <circle cx="43" cy="43" r="29.500" fill="#55585b" stroke="#c3c7ca" strokeWidth="2" />
    <circle cx="43" cy="43" r="20" fill="#3a3c3e" stroke="#95999c" strokeWidth="4" />
    <path d="M43 43L28 18M43 43H72M43 43L28 68" stroke="#b9bdc0" strokeWidth="3.500" />
    <circle cx="43" cy="43" r="4" fill="#b9bdc0" />
  </Tile>
);

const Firefox = () => (
  <Tile tone="firefox">
    <defs>
      <linearGradient id="fx" x1="0.800" y1="0" x2="0.300" y2="1"><stop stopColor="#fff04a" /><stop offset="0.450" stopColor="#f8973a" /><stop offset="1" stopColor="#e6327c" /></linearGradient>
    </defs>
    <path d="M55 3c4 7 12 13 18 22 5 8 8 15 7 26-2 17-17 29-37 29C22 80 7 65 7 45c0-10 4-18 9-24l3-5 2 8 7-8 2 10c3-2 8-2 11-1 0-8 6-16 14-22z" fill="url(#fx)" />
    <circle cx="43" cy="42" r="17" fill="#6a46dc" />
    <path d="M16 34c7-4 20-3 25 1l2 3c-3 4-8 4-12 6-4 6-2 12 4 18-12-2-19-14-19-28z" fill="#fb9a38" />
  </Tile>
);

const Preview = () => (
  <Tile tone="white">
    <rect x="7" y="6" width="72" height="74" rx="12" fill="#a0bdf0" />
    <path d="M7 46h72v22q0 12-12 12H19Q7 80 7 68z" fill="#223a68" />
    <path d="M7 56l10 2 8 8 10-2 6 8-4 8H19Q7 80 7 68z" fill="#d9e2ea" />
    <path d="M14 72l10-3 8 5-2 6H17z" fill="#8a7a62" />
    <path d="M45 48q0-6 7-6h22q8 0 8 6v12H45z" fill="#151515" />
    <path d="M46 60h35l7 24q0 6-8 6H45q-8 0-7-6z" fill="#c9ced2" stroke="#6a6f73" strokeWidth="2" />
    <path d="M50 63h6l-5 19h-5zM59 66l10 4-4 10-8-3zM73 63l4 12-5 3z" fill="#fff" />
    <path d="M58 68l6 3-2 6zM70 72l3 4" stroke="#777" fill="#8b8f93" />
  </Tile>
);

const TeXShop = () => (
  <svg width="94" height="94" viewBox="0 0 94 94">
    <defs><linearGradient id="tx" x2="0" y2="1"><stop stopColor="#9fb2b8" /><stop offset="1" stopColor="#4d656b" /></linearGradient></defs>
    <circle cx="47" cy="47" r="45" fill="url(#tx)" stroke="#cfd4d6" strokeWidth="4" />
    <g fontFamily='"Liberation Serif", serif' fontSize="41" fill="#f2f4f4" stroke="#f2f4f4" strokeWidth="0.600">
      <text x="11" y="59">T</text>
      <text x="32" y="67">E</text>
      <text x="52" y="59">X</text>
    </g>
  </svg>
);

const Stack = () => (
  <svg width="90" height="66" viewBox="0 0 90 66">
    <rect x="9" y="0" width="72" height="20" fill="#f3f3f3" stroke="#ccc" />
    <path d="M15 5h26M15 7.500h14" stroke="#b99" strokeWidth="1" />
    <path d="M52 4.500h14" stroke="#e55" strokeWidth="1.200" />
    <rect x="0" y="9" width="90" height="56" fill="#fff" />
    <g fill="none" stroke="#a8a8a8" strokeWidth="0.800">
      <rect x="6" y="16" width="37" height="46" /><rect x="47" y="16" width="37" height="46" />
      <path d="M8 49q12 0 16-23 4 23 16 23M49 49q12 0 16-23 4 23 16 23" stroke="#b99" />
      <path d="M6 50h37M47 50h37" stroke="#9b9" />
      <path d="M8 57l3-2 3 3 4-4 3 4 4-3 3 3 4-3 4 3M49 57l3-2 3 3 4-4 3 4 4-3 3 3 4-3 4 3" />
      <path d="M30 19h11M30 22h11M71 19h11M71 22h11M8 20h14M49 20h14" stroke="#777" />
    </g>
  </svg>
);

const Trash = () => (
  <svg width="76" height="98" viewBox="0 0 76 98">
    <defs><linearGradient id="bin"><stop stopColor="#55585b" /><stop offset="0.350" stopColor="#96999c" /><stop offset="0.700" stopColor="#6d7073" /><stop offset="1" stopColor="#4a4d50" /></linearGradient></defs>
    <path d="M1 14q37-10 74 0l-9 74q-3 9-28 9t-28-9z" fill="url(#bin)" />
    <ellipse cx="38" cy="14" rx="37" ry="8" fill="#34373a" />
    <path d="M9 14L14 4l10-3 9 6 8 2 5-9 9 8 8-1 6 8-10 7-10-4-10 6-10-5-11 3-7-4z" fill="#dfe3e5" />
    <path d="M20 8l8 9M32 12l8-3 2 8M48 6l8 14M60 8l-4 8M14 9l4 8" stroke="#6c7579" strokeWidth="2.500" fill="none" />
    <path d="M24 13l7-3 3 5-7 2z" fill="#4bb3c9" />
    <path d="M44 14l6-2 2 7-6 1z" fill="#c75b42" />
    <path d="M1 14q37 14 74 0" fill="none" stroke="#a4a7aa" strokeWidth="2" />
  </svg>
);

const Shift = styled.div`
  margin-top: ${(p) => p.$y}px;
`;

const apps = [
  [Finder, true], [Launchpad], [Safari], [Messages], [Mail], [Terminal, true], [Chrome, true], [Maps], [Photos], [FaceTime],
  [Calendar], [Contacts], [Reminders], [Notes], [Tv], [Music], [Podcasts], [Keynote], [Numbers], [Pages], [Store], [Settings, false, "2"],
];

const tabs = [
  { icon: <Outlook />, title: "Mail - Ashish Sehrawat - (" },
  { icon: <Indico />, title: "Search · Indico" },
  { icon: <ChatIcon><SiOpenai size={25} /></ChatIcon>, title: "Create Latex Table" },
  { icon: <Indico />, title: "Data2022_AfterglowResid", active: true },
  { icon: <Indico />, title: "BRIL DPG Meeting (9 May" },
  { icon: <Heart />, title: "Crop PNGs for free!" },
  { icon: <Leaf />, title: "AN-22-148 - Online LaTeX" },
];

const menus = [["Chrome", 143, 0.1], ["File", 83, -0.3], ["Edit", 89, -0.3], ["View", 99, -0.4], ["History", 129, -0.4], ["Bookmarks", 175, -0.6], ["Profiles", 133, -0.4], ["Tab", 84, -0.5], ["Window", 137, -0.6], ["Help", 60, -0.5]];

export default function App() {
  return (
    <Desktop>
      <Global />
      <MenuBar>
        <MenuItems>
          <Status $w={28}><FaApple size={34} /></Status>
          <Status $w={39} />
          {menus.map(([name, w, ls], i) => (
            <MenuItem key={name} $w={w} $ls={ls} $bold={i === 0}>{name}</MenuItem>
          ))}
        </MenuItems>
        <StatusItems>
          <Status $w={80}>
            <svg width="34" height="30" viewBox="0 0 34 30"><rect x="1.500" y="1.500" width="31" height="22" rx="3" fill="#8d6461" stroke="#f0efed" strokeWidth="2.600" /><path d="M12 24h10v3h2v3H10v-3h2z" fill="#f0efed" /></svg>
          </Status>
          <Status $w={80}><InputSource>LA</InputSource></Status>
          <Status $w={90}>
            <svg width="50" height="26" viewBox="0 0 50 26"><rect x="1.500" y="1.500" width="43" height="22" rx="6" fill="none" stroke="#a58886" strokeWidth="2" /><rect x="4.500" y="4.500" width="18" height="16" rx="3.500" fill="#f0efed" /><path d="M47 8q4 4 0 9z" fill="#a58886" /></svg>
          </Status>
          <Status $w={72}>
            <svg width="34" height="26" viewBox="0 0 34 26" fill="none" strokeWidth="4"><path d="M2.500 10a20.500 20.500 0 0 1 29 0" stroke="#8e6865" /><path d="M8.500 16a12 12 0 0 1 17 0" stroke="#f0efed" /><path d="M17 26l-5-5.500a7 7 0 0 1 10 0z" fill="#f0efed" /></svg>
          </Status>
          <Status $w={67}>
            <svg width="26" height="28" viewBox="0 0 26 28" fill="none" stroke="#f0efed" strokeWidth="2.800" strokeLinecap="round"><circle cx="11" cy="11" r="9.500" /><path d="M18 19l6.500 7" /></svg>
          </Status>
          <Status $w={67}>
            <svg width="28" height="28" viewBox="0 0 28 28"><rect x="1.300" y="1.300" width="25.400" height="10.600" rx="5.300" fill="none" stroke="#f0efed" strokeWidth="2.400" /><circle cx="7" cy="6.600" r="3.600" fill="#f0efed" /><rect x="0" y="15" width="28" height="13" rx="6.500" fill="#f0efed" /><circle cx="21.300" cy="21.500" r="3.600" fill="#4a2226" /></svg>
          </Status>
          <Status $w={62}>
            <svg width="28" height="28" viewBox="0 0 28 28">
              <defs>
                <radialGradient id="siri"><stop offset="0.200" stopColor="#7fb9d8" /><stop offset="0.550" stopColor="#5a4a86" /><stop offset="0.850" stopColor="#3a2f55" /><stop offset="1" stopColor="#57b3b0" /></radialGradient>
              </defs>
              <circle cx="14" cy="14" r="13.500" fill="url(#siri)" />
              <path d="M4 9q8-7 12 4-4 10-12 5 6-4 0-9z" fill="#d0508c" opacity="0.700" />
              <path d="M14 3q9 2 9 10-4 6-9 1z" fill="#4fb7a6" opacity="0.800" />
              <path d="M15 14q6 2 5 9-6 3-9-2z" fill="#4a78e8" />
              <path d="M11 10q4-4 5 1 3 2 1 8-2-5-6-4 3-2 0-5z" fill="#f4fafd" />
            </svg>
          </Status>
          <Clock>Sun 9 Jul  5:00</Clock>
        </StatusItems>
      </MenuBar>

      <Window>
        <TabStrip>
          <Lights><Light $c="#ec6a5e" /><Light $c="#f5bf4f" /><Light $c="#61c554" /></Lights>
          {tabs.map(({ icon, title, active }, i) => {
            const Box = active ? ActiveTab : Tab;
            return (
              <Box key={title} $divider={i !== 2 && i !== 3}>
                <Favicon>{icon}</Favicon>
                <TabTitle $ls={-0.28}>{title}</TabTitle>
                <Close><Cross /></Close>
              </Box>
            );
          })}
          <StripButton $ml={33}><svg width="24" height="24" viewBox="0 0 24 24" stroke="#fff" strokeWidth="3"><path d="M12 0v24M0 12h24" /></svg></StripButton>
          <StripButton $ml={134}><svg width="20" height="12" viewBox="0 0 20 12" fill="none" stroke="#fff" strokeWidth="2.800"><path d="M1.500 1.500L10 10l8.500-8.500" /></svg></StripButton>
        </TabStrip>

        <Toolbar>
          <NavButtons>
            <Glyph d={PATH.back} size={40} color="#fff" />
            <Glyph d={PATH.forward} size={40} color="#86888b" />
            <Glyph d={PATH.reload} size={40} color="#fff" />
          </NavButtons>
          <Omnibox>
            <svg width="20" height="24" viewBox="0 0 20 24"><rect x="1" y="8" width="18" height="15" rx="2" fill="#9aa0a6" /><path d="M5.500 9V6a4.500 4.500 0 0 1 9 0v3" fill="none" stroke="#9aa0a6" strokeWidth="2.200" /></svg>
            <Url><b>indico.cern.ch</b>/event/1248064/contributions/5246387/attachments/2585969/4461309/Data2022_AfterglowResiduals_v1.pdf</Url>
            <PageActions />
          </Omnibox>
          <IconSlot $w={90}><ToggleExtension /></IconSlot>
          <IconSlot $w={39}><Glyph d={PATH.puzzle} size={31} /></IconSlot>
          <IconSlot $w={91}><svg width="28" height="28" viewBox="0 0 28 28"><path fillRule="evenodd" d="M0 0h28v28H0zM5 4.500v19h13v-19z" fill="#f1f3f4" /></svg></IconSlot>
          <IconSlot $w={36}><Avatar /></IconSlot>
          <IconSlot $w={92}><Glyph d={PATH.more} size={38} /></IconSlot>
        </Toolbar>

        <PdfBar>
          <IconSlot $w={136}><MenuGlyph /></IconSlot>
          <DocTitle>Data2022_AfterglowResiduals</DocTitle>
          <Field $w={48}>5</Field>
          <PageCount>/ 16</PageCount>
          <Rule $mr={22} />
          <IconSlot $w={42}><Glyph d={PATH.minus} size={42} /></IconSlot>
          <IconSlot $w={24} />
          <Field $w={91}>150%</Field>
          <IconSlot $w={24} />
          <IconSlot $w={40}><Glyph d={PATH.plus} size={42} /></IconSlot>
          <IconSlot $w={24} />
          <Rule $mr={40} />
          <IconSlot $w={38}>
            <svg width="38" height="30" viewBox="0 0 38 30" fill="#f1f1f1"><rect x="1.700" y="1.700" width="34.600" height="26.600" rx="3" fill="none" stroke="#f1f1f1" strokeWidth="3.200" /><path d="M19 5l5 6.500H14zM19 25l5-6.500H14z" /></svg>
          </IconSlot>
          <IconSlot $w={34} />
          <IconSlot $w={38}><Glyph d={PATH.rotate} size={39} /></IconSlot>
          <IconSlot $w={1156} />
          <IconSlot $w={40}><Glyph d={PATH.download} size={40} /></IconSlot>
          <IconSlot $w={39} />
          <IconSlot $w={42}><Glyph d={PATH.print} size={40} /></IconSlot>
          <IconSlot $w={39} />
          <IconSlot $w={40}><Glyph d={PATH.more} size={40} /></IconSlot>
        </PdfBar>

        <Viewer>
          <Slide>
            <SlideTitle>{"Period 2022 E  (New Module Veto)"}</SlideTitle>
            <SlideBody>
              <Bullets>
                <Bullet><Dot /><span>Type 1<br />Residual</span></Bullet>
              </Bullets>
              <Charts>
                <Chart points={scatterTop} height={921} yTitleEnd={478} xAxis />
                <Chart points={scatterBottom} height={400} yTitleEnd={178} />
              </Charts>
            </SlideBody>
          </Slide>
        </Viewer>
      </Window>

      <DockPanel>
        {apps.map(([Icon, running, badge], i) => (
          <DockItem key={i}>
            <Icon />
            {running && <Running />}
            {badge && <Badge>{badge}</Badge>}
          </DockItem>
        ))}
        <DockRule $ml={26} $mr={23} />
        <DockItem><Firefox /></DockItem>
        <DockItem><Preview /><Running /></DockItem>
        <DockItem><Shift $y={-4}><TeXShop /></Shift></DockItem>
        <DockRule $ml={26} $mr={22} />
        <DockItem $w={114}><Shift $y={9}><Stack /></Shift></DockItem>
        <DockItem $w={112}><Shift $y={-8}><Trash /></Shift></DockItem>
      </DockPanel>
    </Desktop>
  );
}
